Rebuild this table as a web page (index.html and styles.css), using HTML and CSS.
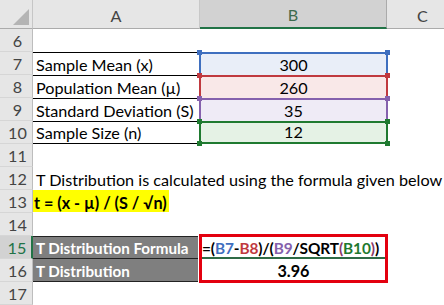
FILE: index.html
```html
<!DOCTYPE html>
<html>
<head>
<meta charset="utf-8">
<link rel="stylesheet" href="styles.css">
</head>
<body>
<div class="sheet">
  <div class="corner"><svg class="tri" width="16" height="16" viewBox="0 0 16 16"><polygon points="16,0 16,16 0,16" fill="#b4b4b4"/></svg></div>
  <div class="colh">A</div>
  <div class="colh sel">B</div>
  <div class="colh last">C</div>

  <div class="rh">6</div><div class="cell span"></div>

  <div class="rh">7</div><div class="cell a bt">Sample Mean (x)</div><div class="cell b blue"><i class="h tl"></i><i class="h tr"></i>300</div><div class="cell"></div>
  <div class="rh">8</div><div class="cell a bt">Population Mean (µ)</div><div class="cell b red"><i class="h tl"></i><i class="h tr"></i>260</div><div class="cell"></div>
  <div class="rh">9</div><div class="cell a bt">Standard Deviation (S)</div><div class="cell b purple"><i class="h tl"></i><i class="h tr"></i>35</div><div class="cell"></div>
  <div class="rh">10</div><div class="cell a bt bb">Sample Size (n)</div><div class="cell b green last-b"><i class="h tl"></i><i class="h tr"></i><i class="h bl"></i><i class="h br"></i>12</div><div class="cell"></div>

  <div class="rh">11</div><div class="cell span"></div>
  <div class="rh">12</div><div class="cell a span">T Distribution is calculated using the formula given below</div>
  <div class="rh">13</div><div class="cell a span"><span class="hl">t = (x - µ) / (S / √n)</span></div>
  <div class="rh">14</div><div class="cell span"></div>

  <div class="rh sel">15</div><div class="cell a dark dt">T Distribution Formula</div>
  <div class="box">
    <div class="fx"><span class="k">=(</span><span class="c1">B7</span><span class="k">-</span><span class="c2">B8</span><span class="k">)/(</span><span class="c3">B9</span><span class="k">/SQRT</span><span class="c5">(</span><span class="c4">B10</span><span class="c5">)</span><span class="k">)</span></div>
    <div class="res">3.96</div>
  </div>
  <div class="cell"></div>
  <div class="rh">16</div><div class="cell a dark db">T Distribution</div><div class="cell"></div>
  <div class="rh">17</div><div class="cell span"></div>
</div>
</body>
</html>
```

FILE: styles.css
```css
html, body {
  margin: 0;
  padding: 0;
  background: #ffffff;
  overflow: hidden;
}
.sheet {
  display: grid;
  grid-template-columns: 33px 167px 187px 57px;
  grid-template-rows: 29px repeat(12, 23px);
  font-family: Lato, "Liberation Sans", sans-serif;
  font-size: 16.2px;
  color: #000;
  width: 444px;
}
.corner {
  background: #e6e6e6;
  border-right: 1px solid #c6c6c6;
  border-bottom: 1px solid #ababab;
  box-sizing: border-box;
  display: flex;
  align-items: flex-end;
  justify-content: flex-end;
  padding: 0 3px 3px 0;
}
.tri { display: block; }
.colh {
  background: #e6e6e6;
  border-right: 1px solid #c8c8c8;
  border-bottom: 1px solid #ababab;
  box-sizing: border-box;
  display: flex;
  align-items: center;
  justify-content: center;
  color: #444;
  padding-top: 2px;
}
.colh.sel {
  background: #d2d2d2;
  color: #3d6b4e;
  border-bottom: 2px solid #217346;
  border-right: 1px solid #ababab;
}
.colh.last { border-right: none; padding-left: 14px; }
.rh {
  grid-column: 1;
  background: #e6e6e6;
  border-right: 1px solid #bdbdbd;
  border-bottom: 1px solid #d6d6d6;
  box-sizing: border-box;
  display: flex;
  align-items: flex-end;
  justify-content: center;
  color: #444;
  padding-bottom: 1px;
  padding-left: 3px;
}
.rh.sel {
  background: #d2d2d2;
  color: #217346;
  border-right: 2px solid #217346;
}
.cell {
  box-sizing: border-box;
  display: flex;
  align-items: flex-end;
  white-space: nowrap;
  padding-bottom: 1px;
  position: relative;
  min-width: 0;
}
.span { grid-column: 2 / -1; }
.a { padding-left: 3px; }
.bt { border-top: 1px solid #000; }
.bb { border-bottom: 1px solid #000; }
.b {
  justify-content: center;
  border-top: 2px solid;
  border-left: 2px solid;
  border-right: 2px solid;
  margin-left: -1px;
  width: 189px;
}
.blue { border-color: #3f6fbf; background: #e9eef8; }
.red { border-color: #c0393f; background: #f9e8e8; }
.purple { border-color: #8561ad; background: #efebf6; }
.green { border-color: #1f7a30; background: #e5f2e5; }
.last-b { border-bottom: 2px solid #1f7a30; }
.h {
  position: absolute;
  width: 5px;
  height: 5px;
}
.blue .h { background: #3f6fbf; }
.red .h { background: #c0393f; }
.purple .h { background: #8561ad; }
.green .h { background: #1f7a30; }
.tl { left: -4px; top: -4px; }
.tr { right: -4px; top: -4px; }
.bl { left: -4px; bottom: -4px; }
.br { right: -4px; bottom: -4px; }
.hl {
  background: #ffff00;
  font-weight: bold;
  padding: 3px 2px 0 1px;
  margin-left: -3px;
}
.dark {
  background: #7f7f7f;
  color: #fff;
  font-weight: bold;
  font-size: 15.2px;
  margin-right: 2px;
}
.dt { border-top: 1px solid #222; border-bottom: 1px solid #222; }
.db { border-bottom: 1px solid #222; }
.box {
  grid-column: 3;
  grid-row: 11 / span 2;
  border: 3px solid #e3000f;
  margin: -2px -1px -1px -1px;
  display: grid;
  grid-template-rows: 1fr 1fr;
  font-weight: bold;
  position: relative;
  z-index: 1;
}
.fx {
  display: flex;
  align-items: flex-end;
  border-bottom: 2px solid #2e6b46;
  padding-left: 0;
  font-size: 15.4px;
  letter-spacing: -0.1px;
  white-space: nowrap;
}
.res {
  display: flex;
  align-items: flex-end;
  justify-content: center;
}
.k { color: #000; }
.c1 { color: #3f6fbf; }
.c2 { color: #c0393f; }
.c3 { color: #8561ad; }
.c4 { color: #1f7a30; }
.c5 { color: #8a3a6a; }
```
